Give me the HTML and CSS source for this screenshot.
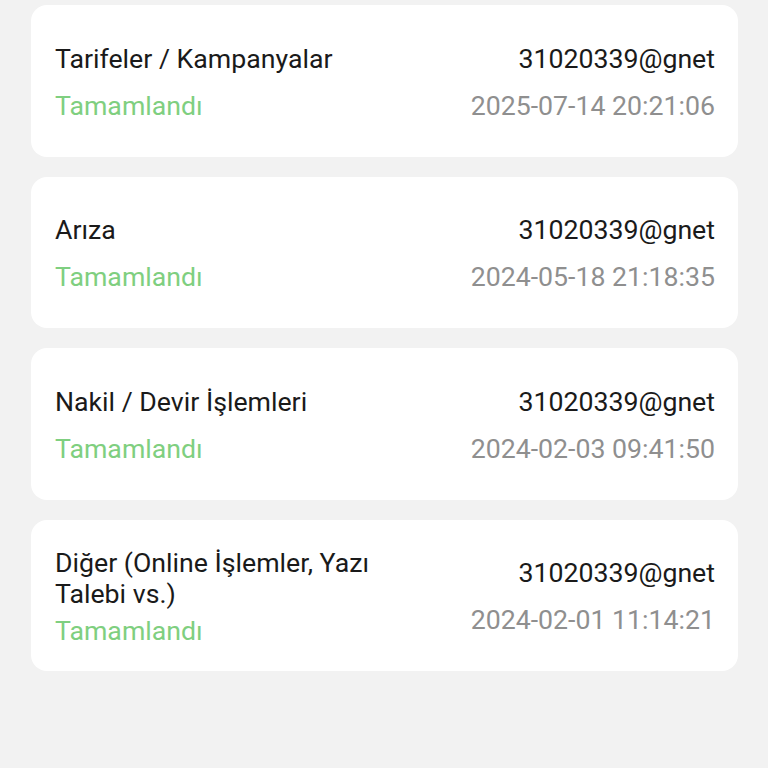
FILE: index.html
```html
<!DOCTYPE html>
<html lang="tr">
<head>
<meta charset="utf-8">
<link rel="stylesheet" href="styles.css">
</head>
<body>
<div class="list">
  <div class="card">
    <div class="left">
      <div class="title">Tarifeler / Kampanyalar</div>
      <div class="status">Tamamlandı</div>
    </div>
    <div class="right">
      <div class="user">31020339@gnet</div>
      <div class="date">2025-07-14 20:21:06</div>
    </div>
  </div>
  <div class="card">
    <div class="left">
      <div class="title">Arıza</div>
      <div class="status">Tamamlandı</div>
    </div>
    <div class="right">
      <div class="user">31020339@gnet</div>
      <div class="date">2024-05-18 21:18:35</div>
    </div>
  </div>
  <div class="card">
    <div class="left">
      <div class="title">Nakil / Devir İşlemleri</div>
      <div class="status">Tamamlandı</div>
    </div>
    <div class="right">
      <div class="user">31020339@gnet</div>
      <div class="date">2024-02-03 09:41:50</div>
    </div>
  </div>
  <div class="card">
    <div class="left wrap">
      <div class="title">Diğer (Online İşlemler, Yazı Talebi vs.)</div>
      <div class="status">Tamamlandı</div>
    </div>
    <div class="right">
      <div class="user">31020339@gnet</div>
      <div class="date">2024-02-01 11:14:21</div>
    </div>
  </div>
</div>
</body>
</html>
```
FILE: styles.css
```css
html, body {
  margin: 0;
  padding: 0;
  background: #f2f2f2;
  font-family: Roboto, "Noto Sans", sans-serif;
}
.list {
  display: flex;
  flex-direction: column;
  gap: 20px;
  padding: 5px 30px 0 31px;
}
.card {
  background: #ffffff;
  border-radius: 16px;
  height: 151.5px;
  box-sizing: border-box;
  padding: 4px 23px 0 24px;
  display: flex;
  justify-content: space-between;
  align-items: center;
}
.left, .right {
  display: flex;
  flex-direction: column;
  gap: 16px;
}
.left {
  max-width: 345px;
}
.left.wrap {
  gap: 6px;
}
.right {
  align-items: flex-end;
}
.title, .user, .status, .date {
  font-size: 26.7px;
  line-height: 31px;
}
.title, .user {
  color: #1a1a1a;
}
.status {
  color: #7fcf80;
}
.date {
  color: #8f8f8f;
}
```
